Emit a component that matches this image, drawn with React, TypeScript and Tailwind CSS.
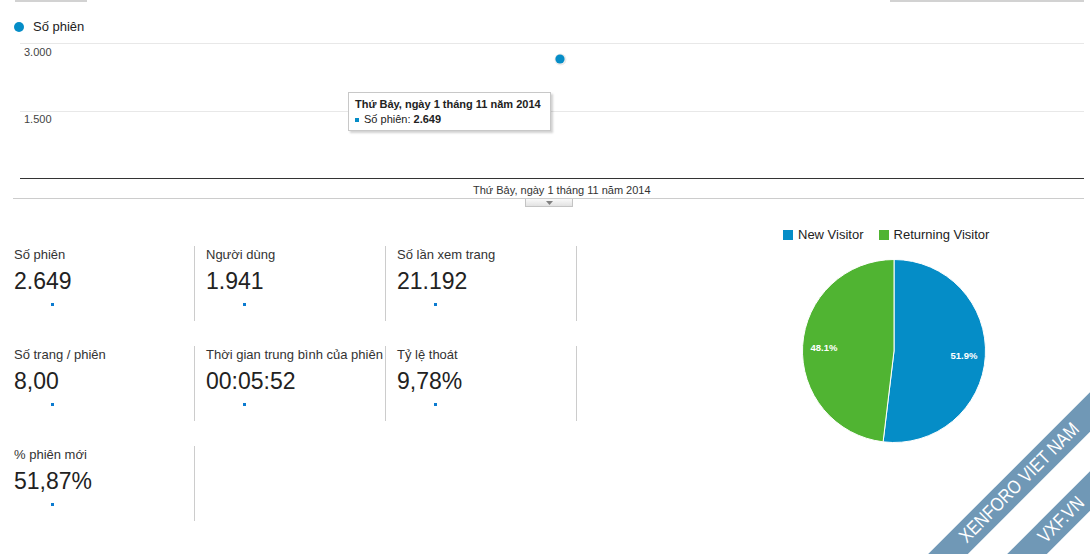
import React from "react";

const metrics = [
  { label: "Số phiên", value: "2.649" },
  { label: "Người dùng", value: "1.941" },
  { label: "Số lần xem trang", value: "21.192" },
  { label: "Số trang / phiên", value: "8,00" },
  { label: "Thời gian trung bình của phiên", value: "00:05:52" },
  { label: "Tỷ lệ thoát", value: "9,78%" },
  { label: "% phiên mới", value: "51,87%" },
];

function Metric({ label, value }: { label: string; value: string }) {
  return (
    <div className="h-[75px] border-r border-[#cccccc] pl-[11px]">
      <div className="pt-px text-[13px] leading-[16px] text-[#333] whitespace-nowrap">{label}</div>
      <div className="mt-[4px] text-[23px] leading-[28px] text-[#222]">{value}</div>
      <div className="mt-[8px] ml-[37px] w-[3px] h-[3px] bg-[#0b7bd0]" />
    </div>
  );
}

export default function App() {
  return (
    <div className="relative w-[1090px] h-[554px] overflow-hidden bg-white font-['Liberation_Sans',Arial,sans-serif]">
      {/* top cut-off bars */}
      <div className="flex justify-between h-[2px]">
        <div className="ml-[15px] w-[72px] h-[2px] bg-[#d2d2d2]" />
        <div className="mr-[6px] w-[194px] h-[2px] bg-[#d2d2d2]" />
      </div>

      {/* legend */}
      <div className="mt-[17px] ml-[14px] flex items-center h-[16px]">
        <div className="w-[10px] h-[10px] rounded-full bg-[#058dc7]" />
        <span className="ml-[9px] text-[13px] leading-[16px] text-[#222]">Số phiên</span>
      </div>

      {/* line chart */}
      <div className="relative h-[163px]">
        <svg className="absolute left-0 top-0" width="1090" height="163">
          <line x1="20" x2="1084" y1="8.5" y2="8.5" stroke="#e8e8e8" strokeWidth="1" />
          <line x1="20" x2="1084" y1="76.5" y2="76.5" stroke="#e8e8e8" strokeWidth="1" />
          <line x1="20" x2="1084" y1="143.5" y2="143.5" stroke="#333" strokeWidth="1" />
          <circle cx="560.5" cy="24.5" r="6" fill="rgba(0,0,0,0.08)" />
          <circle cx="560" cy="24" r="4.6" fill="#058dc7" />
        </svg>
        <span className="absolute left-[24px] top-[11px] text-[11px] leading-[13px] text-[#444]">3.000</span>
        <span className="absolute left-[24px] top-[78px] text-[11px] leading-[13px] text-[#444]">1.500</span>
        <span className="absolute left-[473px] top-[149px] text-[11px] leading-[13px] text-[#333] whitespace-nowrap">
          Thứ Bảy, ngày 1 tháng 11 năm 2014
        </span>
        {/* tooltip */}
        <div className="absolute left-[348px] top-[57px] w-[203px] h-[39px] bg-white border border-[#c8c8c8] shadow-[2px_2px_2px_rgba(0,0,0,0.18)] pl-[6px] pt-[5px]">
          <div className="text-[11px] leading-[13px] font-bold text-[#222] whitespace-nowrap">
            Thứ Bảy, ngày 1 tháng 11 năm 2014
          </div>
          <div className="mt-[2px] flex items-center gap-[5px] text-[11px] leading-[13px] text-[#222] whitespace-nowrap">
            <div className="w-[4px] h-[4px] bg-[#058dc7]" />
            <span>
              Số phiên: <b>2.649</b>
            </span>
          </div>
        </div>
      </div>

      {/* separator + toggle */}
      <div className="ml-[13px] w-[1071px] h-px bg-[#cccccc]" />
      <div className="ml-[525px] w-[48px] h-[8px] border border-t-0 border-[#c4c4c4] bg-gradient-to-b from-[#fafafa] to-[#e2e2e2] flex items-center justify-center">
        <svg width="7" height="4" viewBox="0 0 7 4">
          <path d="M0 0 L7 0 L3.5 4 Z" fill="#808080" />
        </svg>
      </div>

      {/* bottom section */}
      <div className="flex items-start">
        <div className="mt-[39px] ml-[3px] grid grid-cols-[192px_191px_191px] gap-y-[25px]">
          {metrics.map((m) => (
            <Metric key={m.label} label={m.label} value={m.value} />
          ))}
        </div>

        <div className="ml-[206px] mt-[20px]">
          <div className="flex items-center h-[16px] text-[13px] leading-[16px] text-[#222] whitespace-nowrap">
            <div className="w-[10px] h-[10px] bg-[#058dc7]" />
            <span className="ml-[5px]">New Visitor</span>
            <div className="ml-[15px] w-[10px] h-[10px] bg-[#50b432]" />
            <span className="ml-[5px]">Returning Visitor</span>
          </div>
          <svg className="mt-[15px] ml-[18px] block" width="186" height="186" viewBox="0 0 186 186">
            <path d="M93 93 L93 1.5 A91.5 91.5 0 1 1 82.1 183.85 Z" fill="#058dc7" stroke="#ffffff" strokeWidth="1" />
            <path d="M93 93 L82.1 183.85 A91.5 91.5 0 0 1 93 1.5 Z" fill="#50b432" stroke="#ffffff" strokeWidth="1" />
            <text x="163" y="101" textAnchor="middle" fontSize="9.5" fontWeight="bold" fill="#ffffff" fontFamily="Liberation Sans, Arial, sans-serif">
              51.9%
            </text>
            <text x="23" y="93" textAnchor="middle" fontSize="9.5" fontWeight="bold" fill="#ffffff" fontFamily="Liberation Sans, Arial, sans-serif">
              48.1%
            </text>
          </svg>
        </div>
      </div>

      {/* watermark */}
      <div className="absolute left-[819px] top-[469px] w-[400px] h-[28px] -rotate-45 bg-[#7098b6] flex items-center justify-center">
        <span className="inline-block scale-x-[0.85] text-white text-[19px] leading-[22px] whitespace-nowrap">
          XENFORO VIET NAM
        </span>
      </div>
      <div className="absolute left-[911px] top-[506px] w-[300px] h-[28px] -rotate-45 bg-[#7098b6] flex items-center justify-center">
        <span className="inline-block scale-x-[0.85] text-white text-[19px] leading-[22px] whitespace-nowrap">
          VXF.VN
        </span>
      </div>
    </div>
  );
}
